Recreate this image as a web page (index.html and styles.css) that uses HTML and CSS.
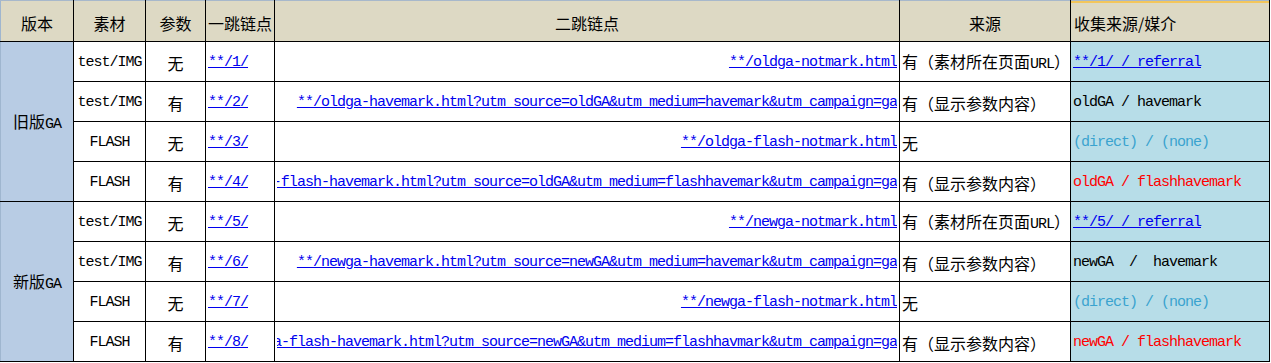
FILE: index.html
```html
<!DOCTYPE html>
<html lang="zh-CN">
<head>
<meta charset="utf-8">
<title>GA 标记测试</title>
<link rel="stylesheet" href="styles.css">
</head>
<body>
<table class="sheet">
  <colgroup>
    <col class="w-ver">
    <col class="w-mat">
    <col class="w-par">
    <col class="w-hop1">
    <col class="w-hop2">
    <col class="w-src">
    <col class="w-col">
  </colgroup>
  <thead>
    <tr class="head">
      <th class="first">版本</th>
      <th>素材</th>
      <th>参数</th>
      <th class="left">一跳链点</th>
      <th>二跳链点</th>
      <th>来源</th>
      <th class="left last">收集来源/媒介</th>
    </tr>
  </thead>
  <tbody>
    <tr>
      <td class="ver first" rowspan="4">旧版<span class="en">GA</span></td>
      <td class="en c">test/IMG</td>
      <td class="c">无</td>
      <td class="en l"><a href="#">**/1/</a></td>
      <td class="en hop2"><div class="clip"><a href="#">**/oldga-notmark.html</a></div></td>
      <td class="l">有（素材所在页面<span class="en">URL</span>）</td>
      <td class="en coll"><a href="#">**/1/ / referral</a></td>
    </tr>
    <tr>
      <td class="en c">test/IMG</td>
      <td class="c">有</td>
      <td class="en l"><a href="#">**/2/</a></td>
      <td class="en hop2"><div class="clip"><a href="#">**/oldga-havemark.html?utm_source=oldGA&amp;utm_medium=havemark&amp;utm_campaign=ga</a></div></td>
      <td class="l">有（显示参数内容）</td>
      <td class="en coll">oldGA / havemark</td>
    </tr>
    <tr>
      <td class="en c">FLASH</td>
      <td class="c">无</td>
      <td class="en l"><a href="#">**/3/</a></td>
      <td class="en hop2"><div class="clip"><a href="#">**/oldga-flash-notmark.html</a></div></td>
      <td class="l">无</td>
      <td class="en coll direct">(direct) / (none)</td>
    </tr>
    <tr>
      <td class="en c">FLASH</td>
      <td class="c">有</td>
      <td class="en l"><a href="#">**/4/</a></td>
      <td class="en hop2"><div class="clip"><a href="#">**/oldga-flash-havemark.html?utm_source=oldGA&amp;utm_medium=flashhavemark&amp;utm_campaign=ga</a></div></td>
      <td class="l">有（显示参数内容）</td>
      <td class="en coll red">oldGA / flashhavemark</td>
    </tr>
    <tr>
      <td class="ver first" rowspan="4">新版<span class="en">GA</span></td>
      <td class="en c">test/IMG</td>
      <td class="c">无</td>
      <td class="en l"><a href="#">**/5/</a></td>
      <td class="en hop2"><div class="clip"><a href="#">**/newga-notmark.html</a></div></td>
      <td class="l">有（素材所在页面<span class="en">URL</span>）</td>
      <td class="en coll"><a href="#">**/5/ / referral</a></td>
    </tr>
    <tr>
      <td class="en c">test/IMG</td>
      <td class="c">有</td>
      <td class="en l"><a href="#">**/6/</a></td>
      <td class="en hop2"><div class="clip"><a href="#">**/newga-havemark.html?utm_source=newGA&amp;utm_medium=havemark&amp;utm_campaign=ga</a></div></td>
      <td class="l">有（显示参数内容）</td>
      <td class="en coll">newGA  /  havemark</td>
    </tr>
    <tr>
      <td class="en c">FLASH</td>
      <td class="c">无</td>
      <td class="en l"><a href="#">**/7/</a></td>
      <td class="en hop2"><div class="clip"><a href="#">**/newga-flash-notmark.html</a></div></td>
      <td class="l">无</td>
      <td class="en coll direct">(direct) / (none)</td>
    </tr>
    <tr>
      <td class="en c">FLASH</td>
      <td class="c">有</td>
      <td class="en l"><a href="#">**/8/</a></td>
      <td class="en hop2"><div class="clip"><a href="#">**/newga-flash-havemark.html?utm_source=newGA&amp;utm_medium=flashhavmark&amp;utm_campaign=ga</a></div></td>
      <td class="l">有（显示参数内容）</td>
      <td class="en coll red">newGA / flashhavemark</td>
    </tr>
  </tbody>
</table>
</body>
</html>
```

FILE: styles.css
```css
html, body {
  margin: 0;
  padding: 0;
  background: #ffffff;
}

.sheet {
  border-collapse: collapse;
  table-layout: fixed;
  width: 1269px;
  font-family: "Noto Sans CJK SC", "Liberation Mono", sans-serif;
  font-size: 16px;
  color: #000;
}

.w-ver { width: 73px; }
.w-mat { width: 72px; }
.w-par { width: 60px; }
.w-hop1 { width: 69px; }
.w-hop2 { width: 625px; }
.w-src { width: 171px; }
.w-col { width: 199px; }

.sheet th,
.sheet td {
  border: 1px solid #000;
  padding: 3px 2px 0 2px;
  height: 36px;
  vertical-align: middle;
  white-space: pre;
  overflow: hidden;
  line-height: 20px;
}

.head th {
  height: 37px;
  background: #ddd9c4;
  font-weight: normal;
  text-align: center;
  border-top: 1px solid #a7b8cb;
}

.head th.left {
  text-align: left;
}

.head th.last {
  padding-left: 3px;
  box-shadow: inset 0 2px 0 #f3c65c;
  background: #ddd9c4;
}

.sheet .first {
  border-left: 1px solid #9fb6cf;
}

.ver {
  background: #b8cce4;
  text-align: center;
}

.en,
td.en,
.coll {
  font-family: "Liberation Mono", "Noto Sans CJK SC", monospace;
  font-size: 15px;
  letter-spacing: -1px;
}

.c { text-align: center; }
.l { text-align: left; }

.hop2 {
  padding-right: 2px;
}

.clip {
  display: flex;
  justify-content: flex-end;
  overflow: hidden;
}

.clip a {
  flex-shrink: 0;
  white-space: pre;
}

.coll {
  background: #b7dde8;
  padding-left: 3px;
  text-align: left;
}

a {
  color: #0000ee;
  text-decoration: underline;
}

.direct {
  color: #3aa3cf;
}

.red {
  color: #ff0000;
}
```
